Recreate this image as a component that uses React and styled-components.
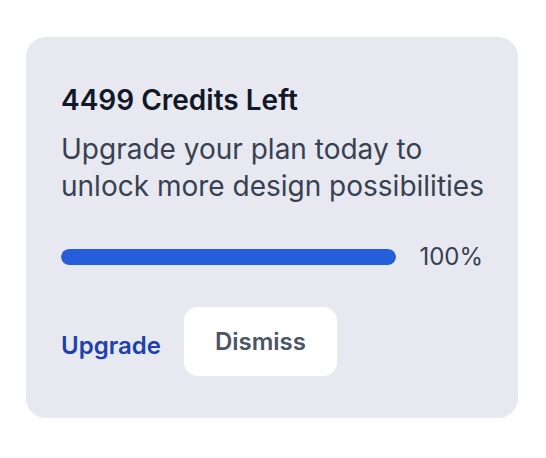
import React from 'react';
import styled, {createGlobalStyle} from 'styled-components';

const GlobalStyle = createGlobalStyle`
  body {
    margin: 0;
    background: #ffffff;
    font-family: Inter, "Noto Sans", sans-serif;
  }
`;

const Page = styled.div`
  padding: 37px 28px 40px 26px;
`;

const Card = styled.div`
  width: 492px;
  box-sizing: border-box;
  padding: 46px 35px 42px 35px;
  background-color: #e8e9f0;
  border-radius: 20px;
`;

const Title = styled.h3`
  margin: 0;
  font-size: 28px;
  line-height: 34px;
  font-weight: 600;
  color: #111827;
`;

const Text = styled.p`
  margin: 14px -6px 0 0;
  font-size: 28px;
  line-height: 37px;
  color: #374151;
`;

const ProgressRow = styled.div`
  display: flex;
  align-items: center;
  gap: 23px;
  margin-top: 37px;
`;

const Track = styled.div`
  flex: 1;
  height: 16px;
  border-radius: 8px;
  background-color: #d1d5db;
  overflow: hidden;
`;

const Fill = styled.div`
  height: 100%;
  border-radius: 8px;
  background-color: #255ddb;
`;

const Percent = styled.span`
  font-size: 24px;
  line-height: 29px;
  color: #374151;
`;

const Actions = styled.div`
  display: flex;
  align-items: center;
  gap: 23px;
  margin-top: 36px;
`;

const UpgradeLink = styled.button`
  border: none;
  background: none;
  padding: 0;
  margin-top: 7px;
  font-family: inherit;
  font-size: 24px;
  font-weight: 600;
  color: #1e3fae;
  cursor: pointer;
`;

const DismissButton = styled.button`
  width: 153px;
  height: 69px;
  border: none;
  border-radius: 14px;
  background-color: #ffffff;
  font-family: inherit;
  font-size: 24px;
  font-weight: 600;
  color: #4b5563;
  cursor: pointer;
`;

function CreditsCard({credits, progress}) {
  return (
    <Card>
      <Title>{credits} Credits Left</Title>
      <Text>Upgrade your plan today to unlock more design possibilities</Text>
      <ProgressRow>
        <Track>
          <Fill style={{width: `${progress}%`}} />
        </Track>
        <Percent>{progress}%</Percent>
      </ProgressRow>
      <Actions>
        <UpgradeLink>Upgrade</UpgradeLink>
        <DismissButton>Dismiss</DismissButton>
      </Actions>
    </Card>
  );
}

export default function App() {
  return (
    <Page>
      <GlobalStyle />
      <CreditsCard credits={4499} progress={100} />
    </Page>
  );
}
